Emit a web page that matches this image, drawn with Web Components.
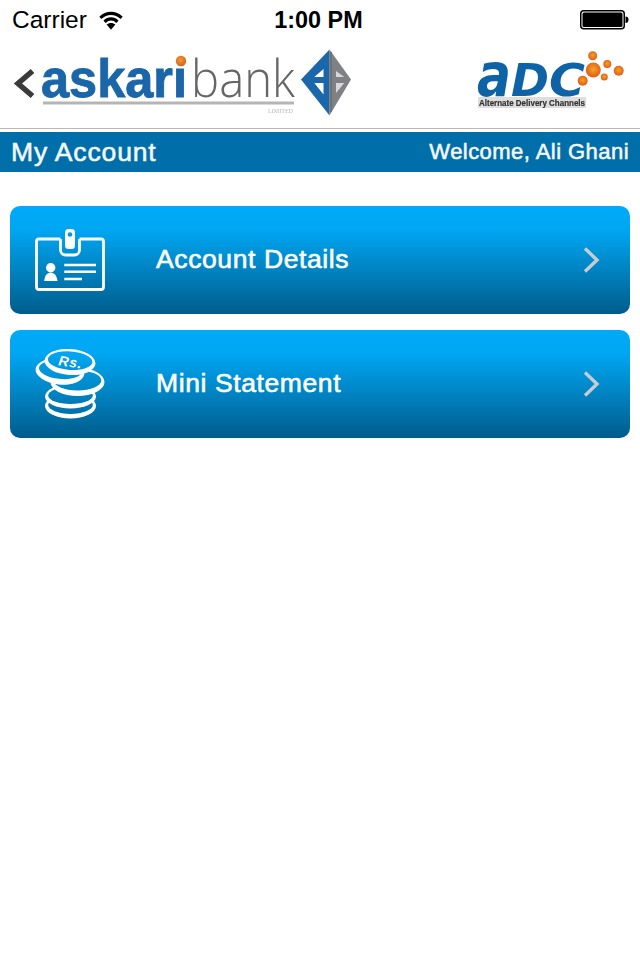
<!doctype html>
<html><head><meta charset="utf-8"><title>My Account</title>
<style>
html,body{margin:0;background:#fff;font-family:"Liberation Sans",Arial,sans-serif}
body{width:640px;height:960px;overflow:hidden}
</style></head>
<body>
<status-bar></status-bar>
<brand-header></brand-header>
<title-bar><span slot="title">My Account</span><span slot="user">Welcome, Ali Ghani</span></title-bar>
<menu-list>
  <menu-row icon="card">Account Details</menu-row>
  <menu-row icon="coins">Mini Statement</menu-row>
</menu-list>
<script>
function def(name,html){customElements.define(name,class extends HTMLElement{constructor(){super();this.attachShadow({mode:'open'}).innerHTML=html}})}

def('status-bar',`<style>
:host{display:flex;height:40px;box-sizing:border-box;padding:0 11px 0 12px;align-items:center;color:#000;font:24.500px/40px "Liberation Sans",sans-serif}
.l{display:flex;align-items:center;gap:12px;flex:1}
.c{font-weight:700;font-size:23.400px;flex:none;margin-right:4px}
.r{flex:1;display:flex;justify-content:flex-end}
svg{display:block}
</style>
<div class="l"><span>Carrier</span>
<svg width="24" height="19" viewBox="0 0 24 19"><path d="M1.400 6.800C7.500 .9 16.500 .9 22.600 6.800" fill="none" stroke="#000" stroke-width="3.200"/><path d="M5.600 10.800C9.400 7 14.600 7 18.400 10.800" fill="none" stroke="#000" stroke-width="3.200"/><path d="M12 18.800L7.600 13.600C10.200 11.500 13.800 11.500 16.400 13.600Z" fill="#000"/></svg></div>
<div class="c">1:00 PM</div>
<div class="r"><svg width="49" height="20" viewBox="0 0 49 20"><rect x=".75" y=".75" width="43.500" height="18" rx="3" fill="#fff" stroke="#000" stroke-width="1.500"/><rect x="2.500" y="2.500" width="40" height="14.500" rx="1.500" fill="#000"/><path d="M45.500 6.500c2 0 3 1.200 3 3.200s-1 3.300-3 3.300z" fill="#000"/></svg></div>`);

def('brand-header',`<style>
:host{display:flex;justify-content:space-between;height:88px;border-bottom:1px solid #b9b9b9}
svg{display:block;height:88px}
.blur{filter:blur(.5px)}
</style>
<svg width="360" viewBox="0 40 360 88">
 <defs><radialGradient id="o1" cx=".45" cy=".4" r=".6"><stop offset="0" stop-color="#f59a2e"/><stop offset="1" stop-color="#d9601c"/></radialGradient></defs>
 <path d="M32.500 71L18 83.500L32.500 96" fill="none" stroke="#3a3a3a" stroke-width="5.500"/>
 <g class="blur">
 <text x="41" y="97" font-family="Liberation Sans" font-weight="700" font-size="53" fill="#1a66a8" stroke="#1a66a8" stroke-width=".9" textLength="146" lengthAdjust="spacingAndGlyphs">askari</text>
 <circle cx="181" cy="61" r="7" fill="#fff"/><circle cx="181" cy="61" r="5.200" fill="url(#o1)"/>
 <text x="191" y="97" font-family="Open Sans" font-weight="300" font-size="52" fill="#666" textLength="104" lengthAdjust="spacingAndGlyphs">bank</text>
 <rect x="43" y="101.500" width="251" height="3" fill="#b5b5b5"/>
 <text x="268" y="113" font-family="Liberation Serif" font-size="5.500" fill="#b8b8b8" textLength="25" lengthAdjust="spacingAndGlyphs">LIMITED</text>
 <path d="M329.500 49.500L301 79.500L329.500 115.500Z" fill="#1b67ac"/>
 <path d="M329.500 49.500L351 79.500L329.500 115.500Z" fill="#808185"/>
 <path d="M329.500 52h2.500v60h-2.500z" fill="#707175"/>
 <path d="M323.500 69V77H314.300Z M314.300 83H323.500V94.500Z" fill="#fff"/>
 <path d="M336 71V77H344.300Z M336 83H344.300L336 93Z" fill="#d8d8da"/>
 </g>
</svg>
<svg width="170" viewBox="470 40 170 88">
 <defs><radialGradient id="o2" cx=".5" cy=".45" r=".55"><stop offset="0" stop-color="#f9a21f"/><stop offset="1" stop-color="#dc5a1c"/></radialGradient></defs>
 <g class="blur">
 <rect x="478" y="97" width="108" height="11" fill="#dedede"/>
 <text x="479" y="106" font-family="Liberation Sans" font-weight="700" font-size="8.500" fill="#333" stroke="#333" stroke-width=".2" textLength="106" lengthAdjust="spacingAndGlyphs">Alternate Delivery Channels</text>
 <text x="477" y="96" font-family="DejaVu Sans" font-weight="700" font-style="italic" font-size="60" fill="#0e62a6" textLength="34" lengthAdjust="spacingAndGlyphs">a</text>
 <text x="511" y="96" font-family="DejaVu Sans" font-weight="700" font-style="italic" font-size="45" fill="#0e62a6" textLength="38" lengthAdjust="spacingAndGlyphs">D</text>
 <text x="549" y="96" font-family="DejaVu Sans" font-weight="700" font-style="italic" font-size="45" fill="#0e62a6" textLength="36" lengthAdjust="spacingAndGlyphs">C</text>
 <circle cx="593.300" cy="70" r="7.500" fill="url(#o2)"/><circle cx="592.700" cy="55.700" r="4.500" fill="url(#o2)"/><circle cx="607.300" cy="64" r="4" fill="url(#o2)"/><circle cx="618.700" cy="70.700" r="5" fill="url(#o2)"/><circle cx="604.300" cy="77" r="3.500" fill="url(#o2)"/><circle cx="582.700" cy="80.700" r="5" fill="url(#o2)"/>
 </g>
</svg>`);

def('title-bar',`<style>
:host{display:flex;justify-content:space-between;align-items:center;height:40px;margin-top:3px;background:#006ea8;color:#f4f8fb;padding:0 11px;font-family:"Liberation Sans",sans-serif;-webkit-text-stroke:.55px #f4f8fb}
.t{font-size:26.500px;letter-spacing:.86px}
.u{font-size:22px;letter-spacing:.45px}
</style><div class="t"><slot name="title"></slot></div><div class="u"><slot name="user"></slot></div>`);

def('menu-list',`<style>:host{display:flex;flex-direction:column;gap:16px;padding:34px 10px 0}</style><slot></slot>`);

function coin(cx,cy,rx,ry,rot,thick){const t=rot?` transform="rotate(${rot} ${cx} ${cy})"`:'';
 return `<g${t}><ellipse cx="${cx}" cy="${cy}" rx="${rx}" ry="${ry}" fill="#fff"/><ellipse cx="${cx}" cy="${cy-thick/2+.4}" rx="${rx-3.2}" ry="${ry-thick/2-2}" fill="url(#c)"/></g>`}
const icons={
card:`<svg width="72" height="66" viewBox="34 227 72 66" fill="none" stroke="#fff">
<path d="M60.500 239H39a2.500 2.500 0 0 0-2.500 2.500V287a2.500 2.500 0 0 0 2.500 2.500H101a2.500 2.500 0 0 0 2.500-2.500V241.500a2.500 2.500 0 0 0-2.500-2.500H79.500" stroke-width="2.800"/>
<path d="M60.500 239V250a5 5 0 0 0 5 5H74.500a5 5 0 0 0 5-5V239" stroke-width="2.800"/>
<rect x="65" y="229" width="10" height="20" rx="3.500" fill="#fff" stroke="none"/><circle cx="70" cy="234.500" r="2.300" fill="#0099de" stroke="none"/>
<circle cx="50.700" cy="267.700" r="4.700" fill="#fff" stroke="none"/>
<path d="M44.200 281C44.700 275 47.500 272.800 50.700 272.800S56.800 275 57.500 281Z" fill="#fff" stroke="none"/>
<path d="M64.300 265H96M64.300 271.700H96M64.300 279H82" stroke-width="2.500"/></svg>`,
coins:`<svg width="72" height="80" viewBox="34 344 72 80">
<defs><linearGradient id="c" gradientUnits="userSpaceOnUse" x1="0" y1="330" x2="0" y2="438"><stop offset="0" stop-color="#00aaf8"/><stop offset=".22" stop-color="#00a6f2"/><stop offset="1" stop-color="#005c8c"/></linearGradient></defs>
${coin(70.500,406,25.500,12.500,0,3)}
${coin(70.500,396.500,25.500,12,0,3)}
${coin(77.500,382,27,14,0,4)}
${coin(60,371.500,24.500,13,6,4)}
${coin(70,362,25.500,13,4,3.500)}
<text x="70.500" y="367" text-anchor="middle" transform="rotate(8 70.500 362)" font-family="Liberation Sans" font-weight="700" font-style="italic" font-size="14" fill="#fff">Rs.</text></svg>`};

customElements.define('menu-row',class extends HTMLElement{
 constructor(){super();const s=this.attachShadow({mode:'open'});
 s.innerHTML=`<style>
 :host{display:flex;align-items:center;height:108px;border-radius:10px;background:linear-gradient(#00aaf8 0,#00a6f2 24px,#005c8c 100%);color:#fff;font:26.500px "Liberation Sans",sans-serif;letter-spacing:.6px}
 .i{width:146px;flex:none;padding-left:24px;box-sizing:border-box;display:flex}
 .t{flex:1;-webkit-text-stroke:.6px #fff;padding-bottom:2px}
 .c{flex:none;margin-right:29px;margin-left:8px;display:block}
 svg{display:block}
 </style>
 <div class="i">${icons[this.getAttribute('icon')]}</div><div class="t"><slot></slot></div>
 <svg class="c" width="18" height="26" viewBox="0 0 18 26"><path d="M2 1.500L14 13L2 24.500" fill="none" stroke="#c6ccd2" stroke-width="3.400"/></svg>`;
 }});
</script>
</body></html>
